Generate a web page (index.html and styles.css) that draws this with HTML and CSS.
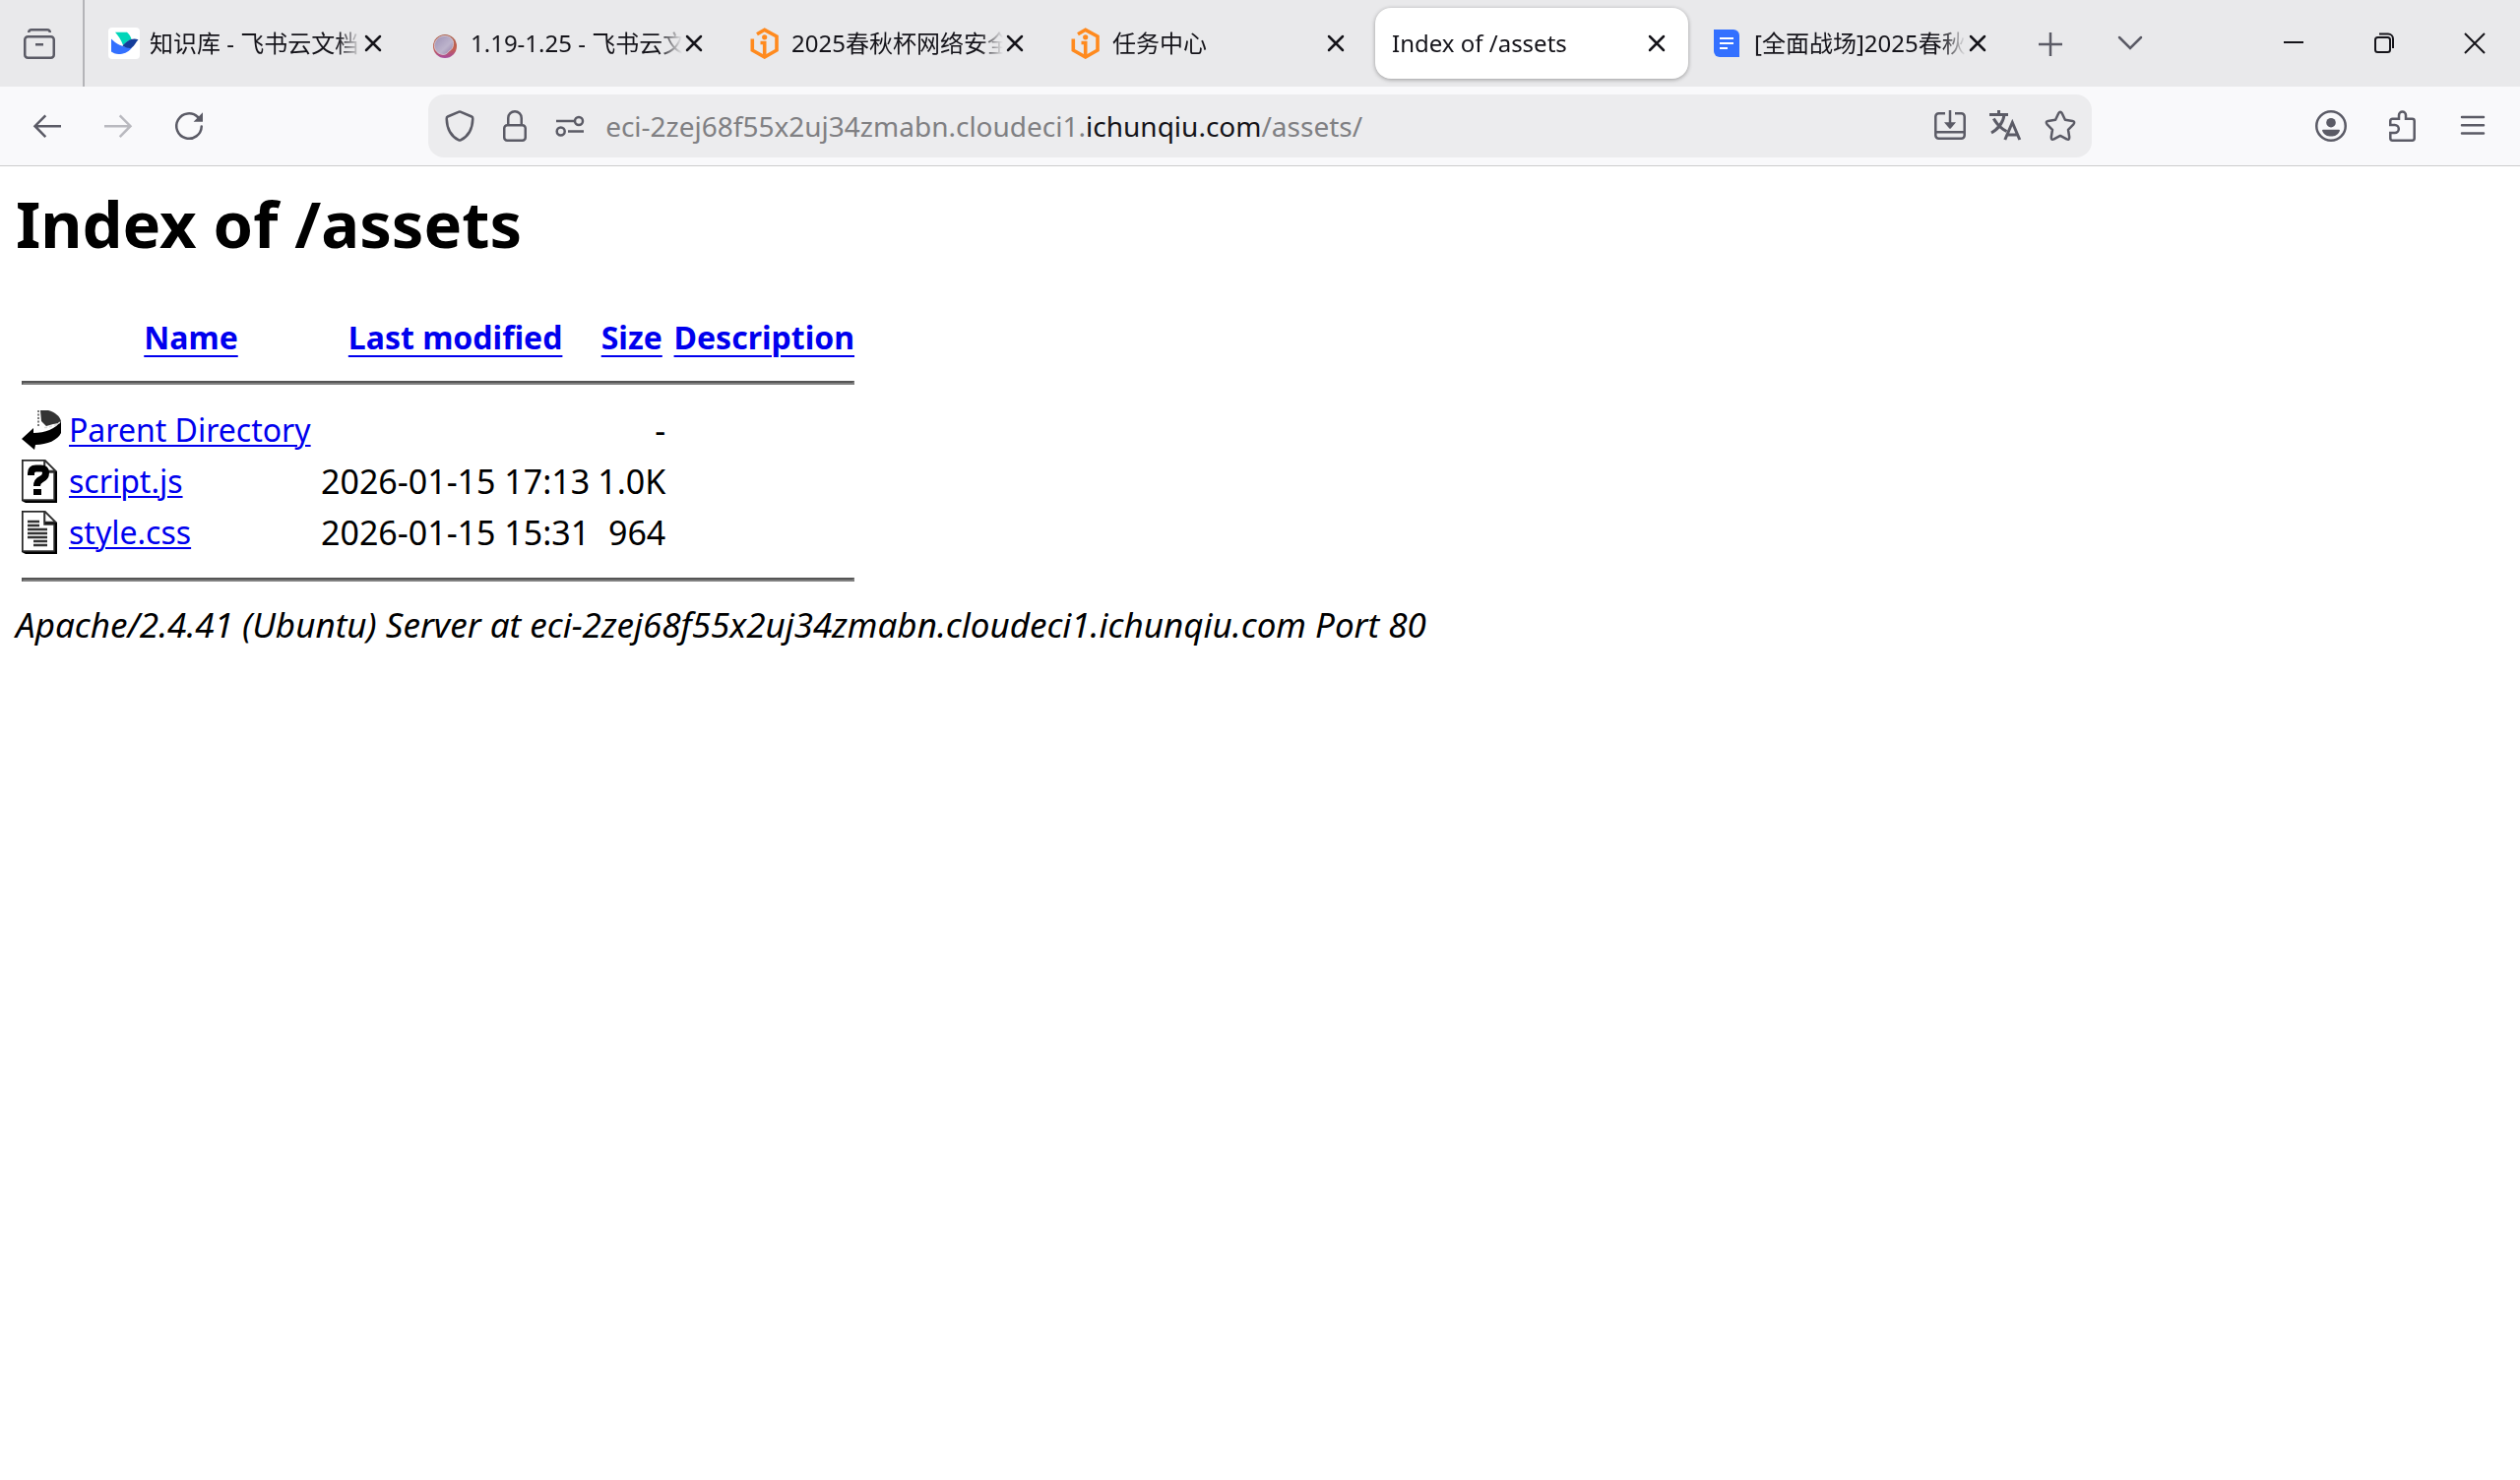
FILE: index.html
```html
<!DOCTYPE html>
<html lang="zh-CN">
<head>
    <meta charset="UTF-8">
    <meta name="viewport" content="width=device-width, initial-scale=1.0">
    <title>Index of /assets</title>
    <link rel="stylesheet" href="styles.css">
</head>
<body>

<!-- Tab strip -->
<header class="tab-bar">
    <button type="button" class="overview-btn" aria-label="Firefox View">
        <svg class="icon" viewBox="0 0 32 32"><rect x="1.25" y="9.25" width="29.5" height="21.5" rx="3"/><path d="M5.2 5v-.2a2.8 2.8 0 0 1 2.8-2.5h16a2.8 2.8 0 0 1 2.8 2.5V5M12 17.3h8"/></svg>
    </button>
    <nav class="tabs">
        <div class="tab">
            <svg class="favicon" viewBox="0 0 32 32">
                <rect width="32" height="32" rx="4" fill="#fff"/>
                <path fill="#00d6b9" d="M7 4.7H19c2.5 2 4 5 4.6 7.3C20 13 17.5 15.5 15 18 13 12.5 10 8 7 4.7z"/>
                <path fill="#3370ff" d="M3 11.5C8 16.5 14 20 24 20.5 20 25.5 15 27 10.5 27 7.5 27 4.5 25.5 3 24.5z"/>
                <path fill="#133c9a" d="M14.5 18.5C19 13 24.5 10 30.5 12.2 28 14.5 27 18.5 23.5 20.8 20.5 21.5 17.5 20.3 14.5 18.5z"/>
            </svg>
            <span class="tab-title">知识库 - 飞书云文档</span>
            <button type="button" class="tab-close" aria-label="Close tab"><svg viewBox="0 0 24 24"><path d="M5 5l14 14M19 5L5 19"/></svg></button>
        </div>
        <div class="tab">
            <svg class="favicon" viewBox="0 0 32 32">
                <defs>
                    <linearGradient id="rim" x1="0" y1="0" x2="0" y2="1"><stop offset="0" stop-color="#a8614f"/><stop offset=".6" stop-color="#c4604f"/><stop offset="1" stop-color="#a84aa0"/></linearGradient>
                    <linearGradient id="face" x1="0" y1="0" x2="1" y2="1"><stop offset="0" stop-color="#9d90b4"/><stop offset=".6" stop-color="#bdb4cc"/><stop offset="1" stop-color="#8e7aa4"/></linearGradient>
                </defs>
                <circle cx="16" cy="19" r="12" fill="url(#rim)"/>
                <path fill="url(#face)" stroke="#dccfd8" stroke-width=".8" d="M15 8.500c6-.5 10.500 3.500 9.500 9-.3 3-1.500 5-4.500 6.500-1.500 2.500-4 4-7 3.300C8.500 26.500 5.500 23 5.300 18.500 5.500 13 9.500 9 15 8.500z"/>
            </svg>
            <span class="tab-title">1.19-1.25 - 飞书云文</span>
            <button type="button" class="tab-close" aria-label="Close tab"><svg viewBox="0 0 24 24"><path d="M5 5l14 14M19 5L5 19"/></svg></button>
        </div>
        <div class="tab">
            <svg class="favicon" viewBox="0 0 32 32"><g fill="none" stroke="#ff8a1e" stroke-width="3.6"><path d="M7 6.800l7.700-4.500L27 9v14l-12.300 7L2.300 23V11.500"/><path d="M10.500 15.500h4.200V29"/></g><circle cx="14.7" cy="9.8" r="2.6" fill="#ff8a1e"/></svg>
            <span class="tab-title">2025春秋杯网络安全</span>
            <button type="button" class="tab-close" aria-label="Close tab"><svg viewBox="0 0 24 24"><path d="M5 5l14 14M19 5L5 19"/></svg></button>
        </div>
        <div class="tab">
            <svg class="favicon" viewBox="0 0 32 32"><g fill="none" stroke="#ff8a1e" stroke-width="3.6"><path d="M7 6.800l7.700-4.500L27 9v14l-12.300 7L2.300 23V11.500"/><path d="M10.500 15.500h4.200V29"/></g><circle cx="14.7" cy="9.8" r="2.6" fill="#ff8a1e"/></svg>
            <span class="tab-title">任务中心</span>
            <button type="button" class="tab-close" aria-label="Close tab"><svg viewBox="0 0 24 24"><path d="M5 5l14 14M19 5L5 19"/></svg></button>
        </div>
        <div class="tab active">
            <span class="tab-title">Index of /assets</span>
            <button type="button" class="tab-close" aria-label="Close tab"><svg viewBox="0 0 24 24"><path d="M5 5l14 14M19 5L5 19"/></svg></button>
        </div>
        <div class="tab">
            <svg class="favicon" viewBox="0 0 32 32"><path fill="#3370ff" d="M1 2h20a6 6 0 0 1 6 6v22H7a6 6 0 0 1-6-6z"/><path d="M7 11h14M7 16h14M7 21h8" stroke="#fff" stroke-width="2"/></svg>
            <span class="tab-title">[全面战场]2025春秋</span>
            <button type="button" class="tab-close" aria-label="Close tab"><svg viewBox="0 0 24 24"><path d="M5 5l14 14M19 5L5 19"/></svg></button>
        </div>
    </nav>
    <button type="button" class="strip-btn" aria-label="New tab"><svg class="icon" viewBox="0 0 32 32"><path d="M4 17h24M16 5v24"/></svg></button>
    <button type="button" class="strip-btn" aria-label="List all tabs"><svg class="icon" viewBox="0 0 32 32"><path d="M5 10l11 11 11-11" stroke-linecap="round"/></svg></button>
    <div class="window-controls">
        <button type="button" aria-label="Minimize"><svg viewBox="0 0 32 32"><path d="M6 15h20"/></svg></button>
        <button type="button" aria-label="Restore"><svg viewBox="0 0 32 32"><rect x="7" y="10" width="15" height="15" rx="2.5"/><path d="M11 6.500h9a5 5 0 0 1 5 5V21"/></svg></button>
        <button type="button" aria-label="Close"><svg viewBox="0 0 32 32"><path d="M6 6l20 20M26 6L6 26"/></svg></button>
    </div>
</header>

<!-- Navigation toolbar -->
<div class="toolbar">
    <div class="toolbar-group">
        <button type="button" aria-label="Back"><svg class="icon" viewBox="0 0 32 32"><path d="M30 16.200H4M14.300 5.300L3.500 16.200l10.800 11"/></svg></button>
        <button type="button" aria-label="Forward" disabled><svg class="icon" viewBox="0 0 32 32"><path d="M2 16.200h26M17.700 5.300l10.800 10.900-10.800 11"/></svg></button>
        <button type="button" aria-label="Reload"><svg class="icon" viewBox="0 0 32 32"><path d="M28.750 16.500A12.750 12.750 0 1 1 25 7" stroke-linecap="round"/><path class="solid" d="M30 2.300v9.400h-9.400z"/></svg></button>
    </div>
    <div class="url-bar">
        <button type="button" aria-label="Tracking protection"><svg class="icon" viewBox="0 0 32 32"><path d="M15.300 1.700q.7-.3 1.400 0l11.500 4.800q1.200.5 1.100 2.100C29 18 26 26 16.900 30.300q-.9.500-1.800 0C6 26 3 18 2.700 8.600q-.1-1.600 1.100-2.100z"/></svg></button>
        <button type="button" aria-label="Connection secure"><svg class="icon" viewBox="0 0 32 32"><rect x="5.25" y="15.25" width="21.5" height="15.5" rx="3"/><path d="M9.250 15V8a6.750 6.750 0 0 1 13.500 0v7"/></svg></button>
        <button type="button" aria-label="Permissions"><svg class="icon" viewBox="0 0 32 32"><path d="M2 11h18M14 21.500h16"/><circle cx="25" cy="11" r="4"/><circle cx="6.7" cy="21.5" r="4"/></svg></button>
        <div class="url-text" role="textbox" aria-label="Address" contenteditable="true" spellcheck="false">eci-2zej68f55x2uj34zmabn.cloudeci1.<span class="domain">ichunqiu.com</span>/assets/</div>
        <button type="button" aria-label="Install page"><svg class="icon" viewBox="0 0 32 32"><path d="M11 3.250H4.500a3.200 3.200 0 0 0-3.200 3.200V25.500a3.200 3.200 0 0 0 3.200 3.200h23a3.200 3.200 0 0 0 3.200-3.200V6.450a3.200 3.200 0 0 0-3.200-3.200H21M1.300 22.300h29.400M16 0v14"/><path class="solid" d="M10 12.300h12l-5 6q-1 1-2 0z"/></svg></button>
        <button type="button" aria-label="Translate"><svg class="icon thick" viewBox="0 0 32 32"><path d="M0 4.500h19M9.500 0v4.500M15 5C13.800 12 9 19 2 23M4.300 8.500C7 13.500 12 18.500 17.500 21.500M15.800 30l7.500-17.500L30.800 30M18.500 25h10"/></svg></button>
        <button type="button" aria-label="Bookmark this page"><svg class="icon" viewBox="0 0 32 32"><path stroke-linejoin="round" d="M14.200 3.200Q16 .5 17.800 3.200l3.100 6.600 7.500 1.100q3 .7 1 3.400l-5.400 5.500 1.200 7.500q.1 3.300-2.700 2.100L16 25.900l-6.500 3.500q-2.800 1.200-2.700-2.100L8 19.800 2.600 14.300q-2-2.700 1-3.400l7.500-1.100z"/></svg></button>
    </div>
    <div class="toolbar-group">
        <button type="button" aria-label="Account"><svg class="icon" viewBox="0 0 32 32"><circle cx="16" cy="16" r="14.75"/><circle class="solid" cx="16" cy="12.7" r="4.8"/><path class="solid" d="M8 19.700h16q1.200 0 .9 1.200c-1.500 3.800-5 5.700-8.900 5.700s-7.400-1.900-8.900-5.700q-.3-1.200.9-1.200z"/></svg></button>
        <button type="button" aria-label="Extensions"><svg class="icon" viewBox="0 0 32 32"><path d="M4.250 15v-4a2.200 2.200 0 0 1 2.200-2.200H13V5a3.500 3.500 0 0 1 7 0v3.800h6.500a2.200 2.200 0 0 1 2.200 2.200v17.500a2.200 2.200 0 0 1-2.200 2.200h-20a2.200 2.200 0 0 1-2.200-2.200V23h4.500a4 4 0 0 0 0-8z"/></svg></button>
        <button type="button" aria-label="Menu"><svg class="icon" viewBox="0 0 32 32"><path d="M5 7h22M5 15.200h22M5 23.500h22" stroke-linecap="round"/></svg></button>
    </div>
</div>

<!-- Directory listing -->
<main class="page">
    <h1>Index of /assets</h1>
    <table class="listing">
        <tr>
            <th class="col-icon"></th>
            <th class="col-name"><a href="?C=N;O=D">Name</a></th>
            <th class="col-date"><a href="?C=M;O=A">Last modified</a></th>
            <th class="col-size"><a href="?C=S;O=A">Size</a></th>
            <th class="col-desc"><a href="?C=D;O=A">Description</a></th>
        </tr>
        <tr><td colspan="5"><hr></td></tr>
        <tr>
            <td>
                <svg class="file-icon" viewBox="0 0 40 44">
                    <path d="M0 31l12-11v5c12 0 22-4 28-12v12c-3 7-14 12-26 12l-1 5z"/>
                    <path fill="#333" d="M19 2h8c7 2 12 6 13 11l-2 2-6 1-7 2-5-5z"/>
                    <path fill="none" stroke="#777" stroke-width="2" stroke-dasharray="2 1.500" d="M17 2v16"/>
                    <path fill="none" stroke="#ddd" stroke-width="1.5" stroke-dasharray="3 2" d="M23 19.500c6-.5 12-2 16-5.500"/>
                </svg>
            </td>
            <td class="name"><a href="/">Parent Directory</a></td>
            <td></td>
            <td class="right">-</td>
            <td></td>
        </tr>
        <tr>
            <td>
                <svg class="file-icon" viewBox="0 0 40 44">
                    <path d="M24 0l12 12v32H4l-4-2V0z"/>
                    <path fill="#fff" stroke="#333" stroke-width="1.5" d="M1 1h22v12h10v28H1z"/>
                    <path fill="#fff" stroke="#333" stroke-width="1.5" d="M23.500 1L34 11.500H23.500z"/>
                    <path fill="none" stroke="#000" stroke-width="7" d="M9.500 16v-2q0-5 5-5h5q5 0 5 4.500 0 4.500-4.500 6.500-4.500 2-4.500 7"/>
                    <path d="M12 30h8v6h-8z"/>
                </svg>
            </td>
            <td class="name"><a href="script.js">script.js</a></td>
            <td class="right">2026-01-15 17:13</td>
            <td class="right">1.0K</td>
            <td></td>
        </tr>
        <tr>
            <td>
                <svg class="file-icon" viewBox="0 0 40 44">
                    <path d="M24 0l12 12v32H4l-4-2V0z"/>
                    <path fill="#fff" stroke="#333" stroke-width="1.5" d="M1 1h22v13h10v27H1z"/>
                    <path fill="#fff" stroke="#333" stroke-width="1.5" d="M23.500 1L34 11.500H23.500z"/>
                    <path fill="none" stroke="#333" stroke-width="2.4" d="M6 11h12M6 15h12M6 19h20M6 23h20M6 27h20M12 31h14M12 35h14"/>
                </svg>
            </td>
            <td class="name"><a href="style.css">style.css</a></td>
            <td class="right">2026-01-15 15:31</td>
            <td class="right">964</td>
            <td></td>
        </tr>
        <tr><td colspan="5"><hr></td></tr>
    </table>
    <address>Apache/2.4.41 (Ubuntu) Server at eci-2zej68f55x2uj34zmabn.cloudeci1.ichunqiu.com Port 80</address>
</main>

</body>
</html>
```
FILE: styles.css
```css
* {
    box-sizing: border-box;
}
body {
    margin: 0;
    background-color: #fff;
    color: #000;
    font-family: "Noto Sans", "Noto Sans CJK SC", sans-serif;
}
button {
    display: flex;
    align-items: center;
    justify-content: center;
    flex-shrink: 0;
    padding: 0;
    border: none;
    background: none;
    color: inherit;
    cursor: pointer;
}
.icon {
    width: 32px;
    height: 32px;
    fill: none;
    stroke: #5b5b66;
    stroke-width: 2.5;
    overflow: visible;
}
.icon .solid {
    fill: #5b5b66;
    stroke: none;
}

/* Tab strip */
.tab-bar {
    display: flex;
    align-items: center;
    height: 88px;
    background-color: #e9e9eb;
    color: #15141a;
}
.overview-btn {
    width: 86px;
    height: 88px;
    padding-right: 4px;
    border-right: 2px solid #b4b4b8;
}
.tabs {
    display: flex;
    flex: 0 1 1956px;
    min-width: 0;
    gap: 8px;
    padding: 0 1px 0 7px;
}
.tab {
    display: flex;
    align-items: center;
    flex: 1;
    min-width: 0;
    height: 72px;
    padding: 0 20px 0 17px;
    border-radius: 16px;
}
.tab.active {
    background-color: #fff;
    box-shadow: 0 1px 4px rgba(0, 0, 0, 0.35);
}
.favicon {
    flex-shrink: 0;
    width: 32px;
    height: 32px;
    margin-right: 10px;
}
.tab-title {
    flex: 1;
    min-width: 0;
    overflow: hidden;
    white-space: nowrap;
    font-size: 24px;
    line-height: 36px;
    -webkit-mask-image: linear-gradient(to left, transparent, #000 24px);
    mask-image: linear-gradient(to left, transparent, #000 24px);
}
.tab-close svg {
    width: 24px;
    height: 24px;
    fill: none;
    stroke: #15141a;
    stroke-width: 2.5;
    stroke-linecap: round;
}
.strip-btn {
    width: 81px;
    height: 72px;
}
.window-controls {
    display: flex;
    margin-left: auto;
}
.window-controls button {
    width: 92px;
    height: 84px;
}
.window-controls svg {
    width: 32px;
    height: 32px;
    fill: none;
    stroke: #15141a;
    stroke-width: 2;
}

/* Navigation toolbar */
.toolbar {
    display: flex;
    align-items: center;
    justify-content: space-between;
    height: 81px;
    padding: 0 12px;
    background-color: #f9f9fb;
    border-bottom: 1px solid #ccc;
}
.toolbar-group {
    display: flex;
}
.toolbar-group button {
    width: 72px;
    height: 64px;
}
.toolbar button:disabled {
    opacity: 0.4;
}
.url-bar {
    display: flex;
    align-items: center;
    width: calc(66% + 16px);
    height: 64px;
    padding: 0 4px;
    border-radius: 16px;
    background-color: #ececee;
}
.url-bar button {
    width: 56px;
    height: 56px;
}
.url-bar .thick {
    stroke-width: 3;
}
.url-text {
    flex: 1;
    min-width: 0;
    padding-left: 8px;
    overflow: hidden;
    white-space: nowrap;
    font-size: 28px;
    line-height: 44px;
    color: #808083;
}
.url-text .domain {
    color: #15141a;
}

/* Directory listing */
.page {
    padding: 10px 16px;
}
h1 {
    margin: 0 0 42px;
    font-size: 65px;
    line-height: 96px;
}
.listing {
    border-spacing: 4px;
    font-size: 34px;
    line-height: 44px;
}
.listing th,
.listing td {
    padding: 2px;
    vertical-align: top;
    white-space: nowrap;
}
.listing th {
    font-size: 32px;
    line-height: 40px;
}
.listing .name {
    font-size: 32px;
}
.listing .right {
    text-align: right;
}
.listing .col-name {
    width: 252px;
}
.listing .col-date {
    width: 272px;
}
.listing .col-size {
    width: 68px;
}
.listing .col-desc {
    width: 188px;
}
.listing a {
    color: #0000ee;
    text-decoration-thickness: 2px;
    text-underline-offset: 3px;
}
.listing th a {
    text-underline-offset: 6px;
}
.listing hr {
    margin: 16px 0;
    border: 2px solid;
    border-color: #555 #808080 #808080 #555;
}
.file-icon {
    display: block;
    width: 40px;
    height: 44px;
}
address {
    font-size: 35px;
    font-style: italic;
    line-height: 44px;
}
```
